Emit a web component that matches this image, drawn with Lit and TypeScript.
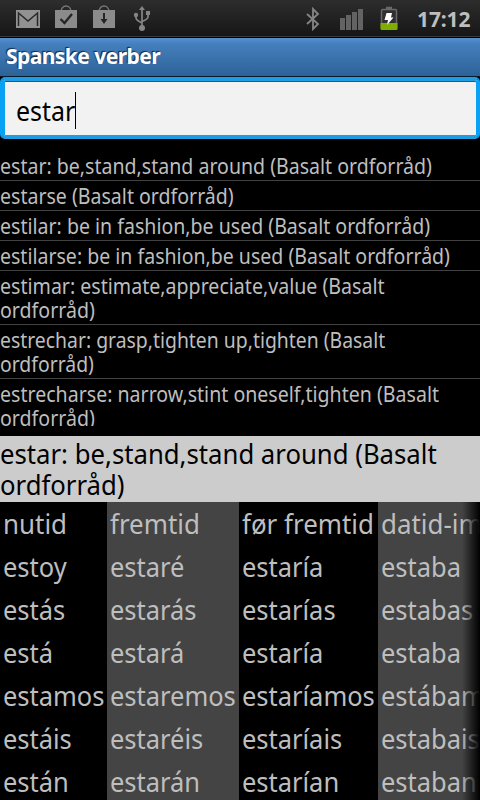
import { LitElement, html, css, svg } from "lit";
import { customElement } from "lit/decorators.js";
import { styleMap } from "lit/directives/style-map.js";

const bag = svg`<path d="M6 7C6 -1 16 -1 16 7" fill="none" stroke="#777" stroke-width="1.400"/><path d="M0 5H22V23H0Z" fill="#8b8b8b"/>`;

@customElement("status-bar")
export class StatusBar extends LitElement {
  static styles = css`
    :host { display: flex; flex: none; height: 38px; box-sizing: border-box; background: linear-gradient(#2d2d2d, #171717 35px, #131313 36px, #3d3b39 36px, #3d3b39 37px, #000 37px); }
    svg { display: block; flex: none; margin-top: 5px; }
    .mail { margin-left: 16px; }
    .bag { margin-left: 15px; }
    .down { margin-left: 16px; }
    .usb { margin-left: 18px; }
    .bt { margin-left: auto; margin-right: 20px; }
    .signal { margin-right: 17px; }
    .battery { margin-right: 19px; }
    time { font: bold 21px/38px "Noto Sans", sans-serif; color: #bebebe; width: 54px; margin-right: 9px; white-space: nowrap; letter-spacing: -0.1px; }
  `;
  render() {
    return html`
      <svg class="mail" width="24" height="28"><path d="M0 5H24V23H0Z" fill="#929292"/><path d="M2.500 21V8L12 16L21.500 8V21" fill="none" stroke="#292929" stroke-width="1.500"/></svg>
      <svg class="bag" width="22" height="28">${bag}<path d="M5.500 14L9.500 18L17 9" fill="none" stroke="#252525" stroke-width="2.300"/></svg>
      <svg class="down" width="22" height="28">${bag}<path d="M11 8V15" stroke="#252525" stroke-width="2"/><path d="M7.500 14H14.500L11 19Z" fill="#252525"/></svg>
      <svg class="usb" width="18" height="28"><g fill="none" stroke="#858585" stroke-width="1.700"><path d="M9 4V22M3 11V13Q3 15 9 18M15 10V12Q15 14 9 16.500"/></g><path d="M9 1L12 5H6ZM13 6H17V10H13Z" fill="#858585"/><circle cx="3" cy="10" r="2.200" fill="#858585"/><circle cx="9" cy="23" r="3" fill="#858585"/></svg>
      <svg class="bt" width="14" height="28"><path d="M1 9L12 19L7 24V4L12 9L1 19" fill="none" stroke="#858585" stroke-width="1.800"/></svg>
      <svg class="signal" width="23" height="28"><path d="M0 13H5V25H0ZM6 10H11V25H6ZM12 7H17V25H12ZM18 4H23V25H18Z" fill="#636363"/></svg>
      <svg class="battery" width="18" height="28"><path d="M6 3H12" stroke="#696969" stroke-width="2.500"/><rect x="1.500" y="4.500" width="15" height="19.500" rx="1" fill="#303030" stroke="#696969" stroke-width="1.500"/><path d="M.5 18H17.500V24Q17.500 25 16 25H2Q.5 25 .5 24Z" fill="#7fae00"/><path d="M6.500 8H12L11 12.500H13.500L7 20L8 15H4.500Z" fill="#fff"/></svg>
      <time>17:12</time>`;
  }
}

const matches: { text: string; squeeze: number }[] = [
  { text: "estar: be,stand,stand around (Basalt ordforråd)", squeeze: 0.931 },
  { text: "estarse (Basalt ordforråd)", squeeze: 0.931 },
  { text: "estilar: be in fashion,be used (Basalt ordforråd)", squeeze: 0.931 },
  { text: "estilarse: be in fashion,be used (Basalt ordforråd)", squeeze: 0.93 },
  { text: "estimar: estimate,appreciate,value (Basalt ordforråd)", squeeze: 0.933 },
  { text: "estrechar: grasp,tighten up,tighten (Basalt ordforråd)", squeeze: 0.923 },
  { text: "estrecharse: narrow,stint oneself,tighten (Basalt ordforråd)", squeeze: 0.932 },
];

const tenses = [
  ["nutid", "estoy", "estás", "está", "estamos", "estáis", "están"],
  ["fremtid", "estaré", "estarás", "estará", "estaremos", "estaréis", "estarán"],
  ["før fremtid", "estaría", "estarías", "estaría", "estaríamos", "estaríais", "estarían"],
  ["datid-im", "estaba", "estabas", "estaba", "estábamos", "estabais", "estaban"],
];

@customElement("app-root")
export class AppRoot extends LitElement {
  static styles = css`
    :host { display: flex; flex-direction: column; width: 480px; height: 800px; overflow: hidden; background: #000; color: #bebebe; font-family: "Noto Sans", sans-serif; }
    .title { flex: none; height: 39px; box-sizing: border-box; padding-left: 6px; background: linear-gradient(#568fd0, #457fbc 6px, #2c6298); border-bottom: 1px solid #071b2c; color: #fff; font-size: 21px; font-weight: bold; line-height: 36px; letter-spacing: -0.55px; text-shadow: -1px -1px 1px #122b45; }
    .field { flex: none; height: 62px; box-sizing: border-box; border: 4px solid; border-width: 4px 4px 4px 5px; border-color: #209ce2 #08a1f4; border-radius: 5px; background: #f2f2f2; box-shadow: inset 0 1px #41515c; padding: 11px 0 0 11px; color: #000; font-size: 27px; line-height: 37px; display: flex; }
    .query { width: 59px; }
    .query span { display: inline-block; transform: scaleX(.925); transform-origin: 0 0; line-height: 37px; }
    .caret { width: 1px; height: 37px; background: #000; }
    .list { flex: none; height: 275px; margin: 12px 0 10px; overflow: hidden; }
    .match { border-bottom: 1px solid #424242; padding: 3px 0 2px; font-size: 21px; line-height: 24px; }
    .match span { display: block; width: 515px; transform-origin: 0 0; }
    .chosen { flex: none; height: 66px; box-sizing: border-box; padding-top: 2px; background: #ccc; color: #000; font-size: 27px; line-height: 31px; }
    .chosen span { display: block; width: 505px; transform: scaleX(.952); transform-origin: 0 0; }
    .table { flex: 1; min-height: 0; display: grid; grid-template-columns: 107px 132px 139px 102px; overflow: hidden; position: relative; }
    .table::after { content: ""; position: absolute; right: 0; top: 0; width: 18px; height: 100%; background: linear-gradient(90deg, transparent, #000); }
    .tense { padding-left: 3px; overflow: hidden; white-space: nowrap; font-size: 27px; line-height: 43px; }
    .tense span { display: inline-block; transform: scaleX(.943); transform-origin: 0 0; vertical-align: top; }
    .tense div:first-child span { transform: scaleX(.96); }
    .tense:nth-child(even) { background: #444; }
  `;
  render() {
    return html`
      <status-bar></status-bar>
      <div class="title">Spanske verber</div>
      <div class="field"><div class="query"><span>estar</span></div><div class="caret"></div></div>
      <div class="list">${matches.map((m) => html`<div class="match"><span style=${styleMap({ transform: `scaleX(${m.squeeze})` })}>${m.text}</span></div>`)}</div>
      <div class="chosen"><span>estar: be,stand,stand around (Basalt ordforråd)</span></div>
      <div class="table">${tenses.map((t) => html`<div class="tense">${t.map((w) => html`<div><span>${w}</span></div>`)}</div>`)}</div>`;
  }
}
